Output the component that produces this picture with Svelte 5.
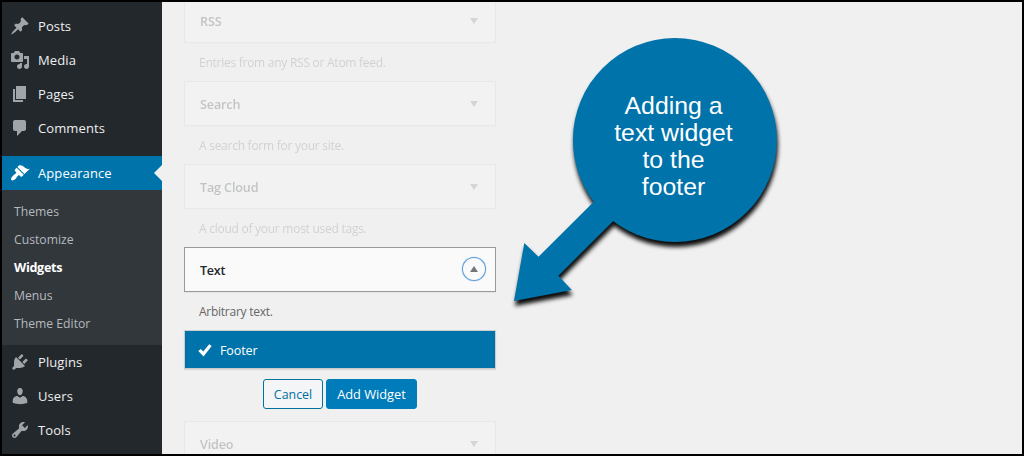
<script lang="ts">
	type MenuItem = { label: string; icon: string; current?: boolean };

	const content: MenuItem[] = [
		{
			label: 'Posts',
			icon: 'M10.44 3.02l1.82-1.82 6.36 6.35-1.83 1.82c-1.05-.68-2.48-.57-3.41.36l-.75.75c-.92.93-1.04 2.35-.35 3.41l-1.83 1.82-2.41-2.41-2.8 2.79c-.42.42-3.38 2.71-3.8 2.29s1.86-3.39 2.28-3.81l2.79-2.79L4.1 9.36l1.83-1.82c1.05.69 2.48.57 3.4-.36l.75-.75c.93-.92 1.05-2.35.36-3.41z'
		},
		{
			label: 'Media',
			icon: 'M13 11V4c0-.55-.45-1-1-1h-1.67L9 1H5L3.67 3H2c-.55 0-1 .45-1 1v7c0 .55.45 1 1 1h10c.55 0 1-.45 1-1zM7 4.5c1.38 0 2.5 1.12 2.5 2.5S8.38 9.5 7 9.5 4.5 8.38 4.5 7 5.62 4.5 7 4.5zM14 6h5v10.5c0 1.38-1.12 2.5-2.5 2.5S14 17.88 14 16.5s1.12-2.5 2.5-2.5c.17 0 .34.02.5.05V9h-3V6zm-4 8.05V13h2v3.5c0 1.38-1.12 2.5-2.5 2.5S7 17.88 7 16.5 8.12 14 9.5 14c.17 0 .34.02.5.05z'
		},
		{ label: 'Pages', icon: 'M6 15V2h10v13H6zm-1 1h8v2H3V5h2v11z' },
		{
			label: 'Comments',
			icon: 'M5 2h9c1.1 0 2 .9 2 2v7c0 1.1-.9 2-2 2h-2l-5 5v-5H5c-1.1 0-2-.9-2-2V4c0-1.1.9-2 2-2z'
		}
	];

	const appearance: MenuItem = {
		label: 'Appearance',
		current: true,
		icon: 'M14.48 11.06L7.41 3.99l1.5-1.5c.5-.56 2.3-.47 3.51.32 1.21.8 1.43 1.28 2.91 2.1 1.18.64 2.45 1.26 4.45.85zm-.71.71L6.7 4.7 4.93 6.47c-.39.39-.39 1.02 0 1.41l1.06 1.06c.39.39.39 1.03 0 1.42-.6.6-1.43 1.11-2.21 1.69-.35.26-.7.53-1.01.84C1.43 14.23.4 16.08 1.4 17.07c.99 1 2.84-.03 4.18-1.36.31-.31.58-.66.85-1.02.57-.78 1.08-1.61 1.69-2.21.39-.39 1.02-.39 1.41 0l1.06 1.06c.39.39 1.02.39 1.41 0z'
	};

	const submenu = ['Themes', 'Customize', 'Widgets', 'Menus', 'Theme Editor'];

	const system: MenuItem[] = [
		{
			label: 'Plugins',
			icon: 'M13.11 4.36L9.87 7.6 8 5.73l3.24-3.24c.35-.34 1.05-.2 1.56.32.52.51.66 1.21.31 1.55zm-8 1.77l.91-1.12 9.01 9.01-1.19.84c-.71.71-2.63 1.16-3.82 1.16H6.14L4.9 17.26c-.59.59-1.54.59-2.12 0-.59-.58-.59-1.53 0-2.12l1.24-1.24v-3.88c0-1.13.4-3.19 1.09-3.89zm7.26 3.97l3.24-3.24c.34-.35 1.04-.21 1.55.31.52.51.66 1.21.31 1.55l-3.24 3.25z'
		},
		{
			label: 'Users',
			icon: 'M10 9.25c-2.27 0-2.73-3.44-2.73-3.44C7 4.02 7.82 2 9.97 2c2.16 0 2.98 2.02 2.71 3.81 0 0-.41 3.44-2.68 3.44zm0 2.57L12.72 10c2.39 0 4.52 2.33 4.52 4.53v2.49s-3.65 1.13-7.24 1.13c-3.65 0-7.24-1.13-7.24-1.13v-2.49c0-2.25 1.94-4.48 4.47-4.48z'
		},
		{
			label: 'Tools',
			icon: 'M16.68 9.77c-1.34 1.34-3.3 1.67-4.95.99l-5.41 6.52c-.99.99-2.59.99-3.58 0s-.99-2.59 0-3.57l6.52-5.42c-.68-1.65-.35-3.61.99-4.95 1.28-1.28 3.12-1.62 4.72-1.06l-2.89 2.89 2.82 2.82 2.86-2.87c.53 1.58.18 3.39-1.08 4.65zM3.81 16.21c.4.39 1.04.39 1.43 0 .4-.4.4-1.04 0-1.43-.39-.4-1.03-.4-1.43 0-.39.39-.39 1.03 0 1.43z'
		}
	];

	const widgets = [
		{ name: 'RSS', description: 'Entries from any RSS or Atom feed.' },
		{ name: 'Search', description: 'A search form for your site.' },
		{ name: 'Tag Cloud', description: 'A cloud of your most used tags.' },
		{ name: 'Text', description: 'Arbitrary text.' },
		{ name: 'Video' }
	];

	let selected = $state('Text');
</script>

{#snippet menuItem(item: MenuItem)}
	<a class="item" class:current={item.current} href="#{item.label}">
		<svg viewBox="0 0 20 20" width="20" height="20" aria-hidden="true"><path d={item.icon} /></svg>
		<span>{item.label}</span>
	</a>
{/snippet}

<div class="screen">
	<nav class="menu">
		{#each content as item (item.label)}
			{@render menuItem(item)}
		{/each}
		<div class="separator"></div>
		{@render menuItem(appearance)}
		<div class="submenu">
			{#each submenu as label (label)}
				<a class:active={label === 'Widgets'} href="#{label}">{label}</a>
			{/each}
		</div>
		{#each system as item (item.label)}
			{@render menuItem(item)}
		{/each}
	</nav>

	<main>
		{#each widgets as widget (widget.name)}
			{@const open = widget.name === selected}
			<section class="widget" class:open>
				<div class="title">
					<h3>{widget.name}</h3>
					<button class="toggle" aria-label="Toggle {widget.name}" onclick={() => (selected = widget.name)}>
						<svg viewBox="0 0 8 6" width="8" height="6"><path d={open ? 'M0 6L4 0l4 6z' : 'M0 0h8L4 6z'} /></svg>
					</button>
				</div>
				{#if widget.description}
					<p>{widget.description}</p>
				{/if}
				{#if open}
					<div class="area">
						<svg viewBox="0 0 14 13" width="14" height="13"><path d="M.3 6.9L2.8 4.9l2.4 2.6L11.2.3l2.5 1.7L5.5 12.6z" /></svg>
						<span>Footer</span>
					</div>
					<div class="actions">
						<button class="cancel">Cancel</button>
						<button class="add">Add Widget</button>
					</div>
				{/if}
			</section>
		{/each}
	</main>

	<div class="callout">
		<svg viewBox="0 0 290 290" width="290" height="290" aria-hidden="true">
			<circle cx="174.9" cy="120" r="102" />
			<path d="M14 281L24.3 223l14.2 13.7L93.5 182H113v19.2L58.4 255.8 71.8 270z" />
		</svg>
		<div class="message">Adding a<br />text widget<br />to the<br />footer</div>
	</div>
</div>

<style>
	:global(body) {
		margin: 0;
		overflow: hidden;
	}

	.screen {
		position: relative;
		box-sizing: border-box;
		width: 1024px;
		height: 456px;
		border: 2px solid #000;
		display: flex;
		overflow: hidden;
		background: #f0f0f0;
		font-family: 'Open Sans', 'Noto Sans', sans-serif;
		font-size: 13px;
	}

	.menu {
		width: 160px;
		flex: none;
		box-sizing: border-box;
		padding-top: 7px;
		background: #23282d;
	}

	.item {
		position: relative;
		display: flex;
		align-items: center;
		gap: 8px;
		height: 34px;
		padding-left: 8px;
		color: #eee;
		letter-spacing: 0.1px;
		text-decoration: none;
	}

	.item svg {
		fill: #a0a5aa;
	}

	.item.current {
		background: #0073aa;
		color: #fff;
	}

	.item.current svg {
		fill: #fff;
	}

	.item.current::after {
		content: '';
		position: absolute;
		right: 0;
		top: 9px;
		border: 8px solid transparent;
		border-left-width: 0;
		border-right-color: #f0f0f0;
	}

	.separator {
		height: 11px;
	}

	.submenu {
		box-sizing: border-box;
		height: 155px;
		padding: 8px 12px 7px;
		background: #32373c;
	}

	.submenu a {
		display: block;
		line-height: 28px;
		font-size: 12.2px;
		color: #b4b9be;
		text-decoration: none;
	}

	.submenu .active {
		color: #fff;
		font-weight: 700;
		font-size: 12.6px;
		letter-spacing: -0.3px;
	}

	main {
		width: 312px;
		margin: -4px 0 0 22px;
	}

	.widget:not(.open) {
		opacity: 0.22;
	}

	.title {
		box-sizing: border-box;
		height: 45px;
		display: flex;
		align-items: center;
		justify-content: space-between;
		padding: 0 9px 0 15px;
		border: 1px solid #ccd0d4;
		background: #fafafa;
		box-shadow: 0 1px 1px rgba(0, 0, 0, 0.04);
	}

	h3 {
		margin: 0;
		padding-top: 2px;
		font-size: 12.6px;
		font-weight: 600;
		letter-spacing: -0.15px;
		color: #23282d;
	}

	.open .title {
		border-color: #999;
	}

	.open h3 {
		letter-spacing: -0.3px;
	}

	.toggle {
		width: 24px;
		height: 24px;
		padding: 0;
		display: flex;
		align-items: center;
		justify-content: center;
		border: 0;
		border-radius: 50%;
		background: none;
		fill: #72777c;
	}

	.open .toggle {
		margin-bottom: 2px;
		box-shadow: inset 0 0 0 1px #5b9dd9, 0 0 1px #5b9dd9;
	}

	p {
		box-sizing: border-box;
		height: 38px;
		margin: 0;
		padding: 1px 0 0 15px;
		line-height: 38px;
		font-size: 12px;
		letter-spacing: -0.26px;
		color: #666;
		white-space: nowrap;
	}

	.area {
		box-sizing: border-box;
		height: 39px;
		display: flex;
		align-items: center;
		gap: 8px;
		padding: 1px 0 0 13px;
		border: 1px solid #ccc;
		background: #0073aa;
		color: #fff;
		font-size: 12.5px;
		letter-spacing: -0.1px;
		box-shadow: 0 1px 1px rgba(0, 0, 0, 0.1);
	}

	.area svg {
		fill: #fff;
	}

	.actions {
		display: flex;
		gap: 3px;
		padding: 10px 0 12px 79px;
	}

	.actions button {
		box-sizing: border-box;
		height: 30px;
		padding: 0;
		border: 1px solid #0071a1;
		border-radius: 3px;
		font-family: inherit;
		font-size: 12.4px;
	}

	.actions .cancel {
		width: 60px;
		background: #f3f5f6;
		color: #0071a1;
	}

	.actions .add {
		width: 91px;
		background: #007cba;
		border-color: #007cba;
		color: #fff;
		font-size: 12.8px;
	}

	.callout {
		position: absolute;
		left: 498px;
		top: 18px;
		width: 290px;
		height: 290px;
	}

	.callout svg {
		overflow: visible;
		fill: #0073aa;
		filter: drop-shadow(1px 5px 2px rgba(0, 0, 0, 0.95));
	}

	.message {
		position: absolute;
		left: 72.5px;
		top: 72px;
		width: 202px;
		text-align: center;
		color: #fff;
		font: 24.8px/27px 'Liberation Sans', Arial, sans-serif;
	}
</style>
